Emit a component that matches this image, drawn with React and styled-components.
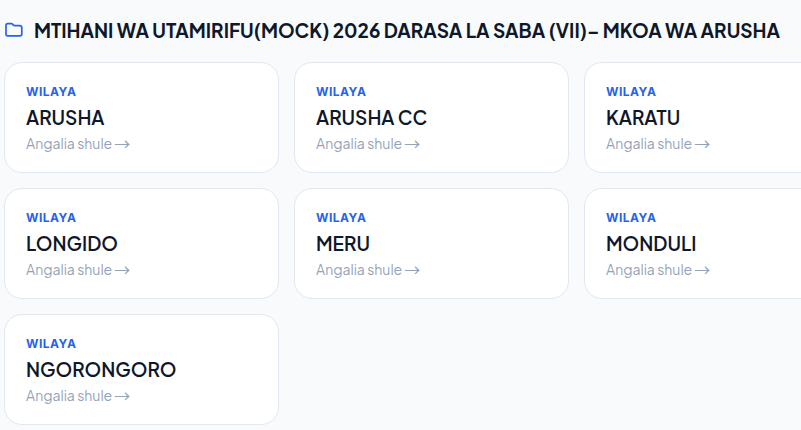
import styled, { createGlobalStyle } from 'styled-components';

const GlobalStyle = createGlobalStyle`
  * {
    box-sizing: border-box;
  }

  body {
    margin: 0;
    background: #f8fafc;
    color: #0f172a;
    font-family: "Plus Jakarta Sans", Inter, sans-serif;
    overflow-x: hidden;
  }
`;

const Page = styled.main`
  padding: 16px 4px 5px;
`;

const Heading = styled.h1`
  display: flex;
  align-items: center;
  gap: 10px;
  margin: 0 0 18px;
  font-size: 19px;
  line-height: 28px;
  font-weight: 700;
  white-space: nowrap;
`;

const FolderIcon = styled.svg`
  flex: none;
  width: 20px;
  height: 20px;
  fill: none;
  stroke: #2563eb;
  stroke-width: 1.7;
  stroke-linejoin: round;
`;

const Grid = styled.div`
  display: grid;
  grid-template-columns: repeat(3, minmax(275px, 1fr));
  gap: 15px;
`;

const Card = styled.a`
  display: block;
  padding: 20px 21px 19px;
  border: 1px solid #e2e8f0;
  border-radius: 18px;
  background: #fff;
  color: inherit;
  text-decoration: none;

  &:hover {
    border-color: #2563eb;
  }
`;

const Label = styled.div`
  color: #2563eb;
  font-family: Inter, sans-serif;
  font-size: 12px;
  line-height: 18px;
  font-weight: 700;
  letter-spacing: 0.5px;
`;

const Name = styled.h2`
  margin: 2px 0;
  font-size: 19px;
  line-height: 28px;
  font-weight: 600;
`;

const More = styled.div`
  display: flex;
  align-items: center;
  gap: 2px;
  color: #94a3b8;
  font-size: 14px;
  line-height: 20px;
`;

const Arrow = styled.span`
  font-family: "Noto Sans CJK JP", sans-serif;
  font-size: 16px;
`;

const districts = [
  'ARUSHA',
  'ARUSHA CC',
  'KARATU',
  'LONGIDO',
  'MERU',
  'MONDULI',
  'NGORONGORO',
];

const DistrictCard = ({ name }) => (
  <Card href="#">
    <Label>WILAYA</Label>
    <Name>{name}</Name>
    <More>
      Angalia shule <Arrow>→</Arrow>
    </More>
  </Card>
);

export default function App() {
  return (
    <>
      <GlobalStyle />
      <Page>
        <Heading>
          <FolderIcon viewBox="0 0 20 20" aria-hidden="true">
            <path d="M2 14V5.500Q2 3.700 3.800 3.700H7.300Q8 3.700 8.500 4.200L9.500 5.200Q10 5.700 10.800 5.700H15.700Q17.800 5.700 17.800 7.800V14Q17.800 15.800 16 15.800H3.800Q2 15.800 2 14Z" />
          </FolderIcon>
          MTIHANI WA UTAMIRIFU(MOCK) 2026 DARASA LA SABA (VII)– MKOA WA ARUSHA
        </Heading>
        <Grid>
          {districts.map((name) => (
            <DistrictCard key={name} name={name} />
          ))}
        </Grid>
      </Page>
    </>
  );
}
